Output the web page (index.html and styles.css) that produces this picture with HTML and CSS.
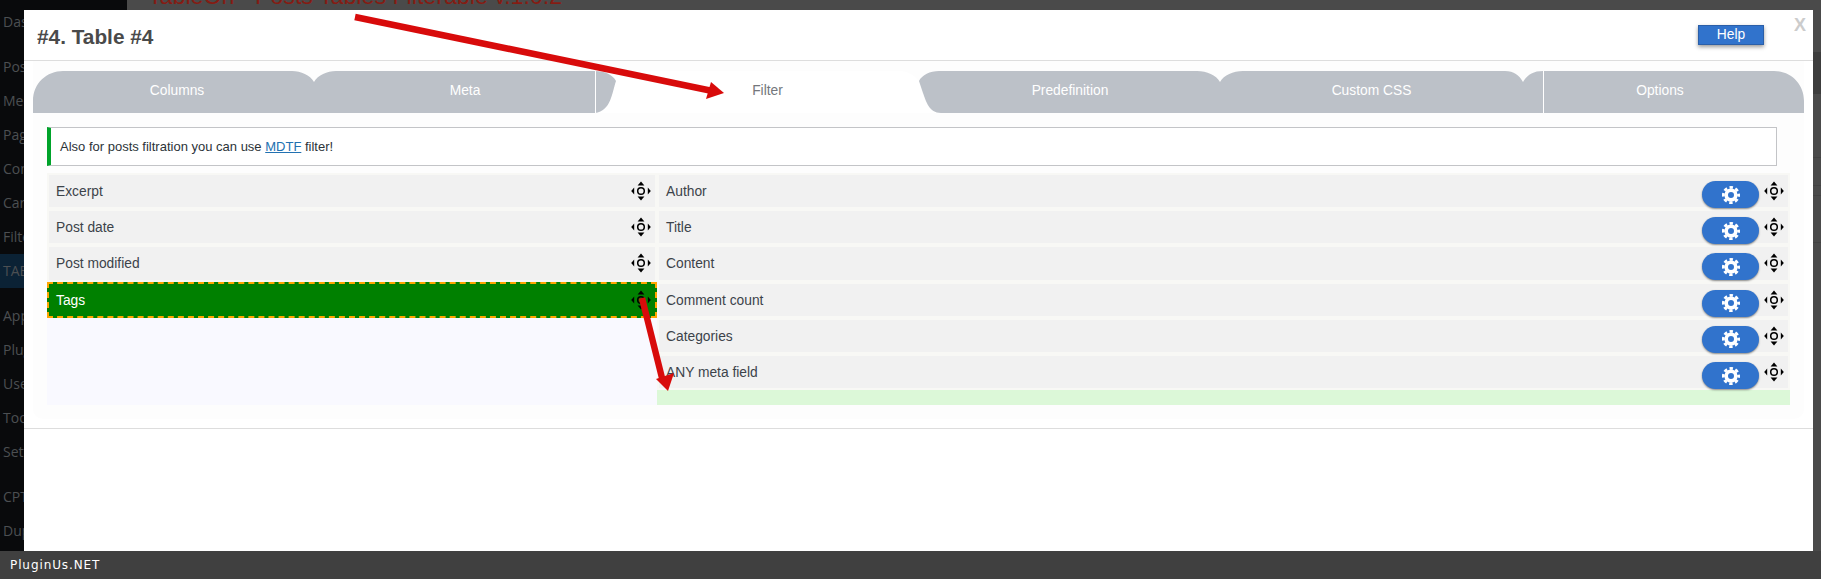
FILE: index.html
```html
<!DOCTYPE html>
<html lang="en">
<head>
    <title>TableOn - Posts Tables Filterable</title>
    <link rel="stylesheet" href="styles.css">
</head>
<body>
    <div class="page">
        <div class="sidebar">
            <ul class="menu">
                <li>Dashboard</li>
            </ul>
            <ul class="menu">
                <li>Posts</li>
                <li>Media</li>
                <li>Pages</li>
                <li>Comments</li>
                <li>Cars</li>
                <li>Filters</li>
                <li class="current">TABLEON</li>
            </ul>
            <ul class="menu">
                <li>Appearance</li>
                <li>Plugins</li>
                <li>Users</li>
                <li>Tools</li>
                <li>Settings</li>
            </ul>
            <ul class="menu">
                <li>CPT UI</li>
                <li>Duplicator</li>
            </ul>
        </div>
        <div class="content">
            <h1 class="page-title">TableOn - Posts Tables Filterable v.1.0.2</h1>
        </div>
    </div>
    <div class="bottom-bar">PluginUs.NET</div>

    <div class="modal">
        <a class="modal-close" href="#">X</a>
        <div class="modal-head">
            <h2>#4. Table #4</h2>
            <button type="button" class="help-btn">Help</button>
        </div>
        <div class="panel">
            <div class="tabs">
                <svg class="tab-shapes" viewBox="0 0 1771 42" width="1771" height="42">
                    <path class="shape-active" d="M562 42C578 40 579 22 583 10C580 5 576 1 570 0H868C876 1 882 5 886 10C890 24 893 42 908 42Z"/>
                    <path class="shape-grey" d="M0 42V30C0 12 14 0 30 0H259C268 0 277 4 281 11C285 4 294 0 303 0H562C572 0 580 4 583 10C579 22 578 40 562 42Z"/>
                    <path class="shape-grey" d="M908 42C896 42 893 30 890 22L886 10C889 4 897 0 906 0H1164C1174 0 1183 4 1187 11C1191 4 1200 0 1210 0H1472C1481 0 1486 4 1490 11C1494 4 1500 0 1510 0H1741C1758 0 1771 13 1771 30V42Z"/>
                    <path class="shape-line" d="M562.5 0V42M1510.5 0V42"/>
                </svg>
                <a class="tab tab-columns" href="#">Columns</a>
                <a class="tab tab-meta" href="#">Meta</a>
                <a class="tab tab-filter active" href="#">Filter</a>
                <a class="tab tab-predef" href="#">Predefinition</a>
                <a class="tab tab-css" href="#">Custom CSS</a>
                <a class="tab tab-options" href="#">Options</a>
            </div>
            <div class="tab-body">
                <div class="notice">Also for posts filtration you can use <a href="#">MDTF</a> filter!</div>
                <div class="lists">
                    <ul class="sort-list unused">
                        <li class="row"><span class="row-title">Excerpt</span><svg class="move-icon"><use href="#move"/></svg></li>
                        <li class="row"><span class="row-title">Post date</span><svg class="move-icon"><use href="#move"/></svg></li>
                        <li class="row"><span class="row-title">Post modified</span><svg class="move-icon"><use href="#move"/></svg></li>
                        <li class="row dragged"><span class="row-title">Tags</span><svg class="move-icon"><use href="#move"/></svg></li>
                    </ul>
                    <ul class="sort-list used">
                        <li class="row"><span class="row-title">Author</span><button type="button" class="gear-btn"><svg class="gear-icon"><use href="#gear"/></svg></button><svg class="move-icon"><use href="#move"/></svg></li>
                        <li class="row"><span class="row-title">Title</span><button type="button" class="gear-btn"><svg class="gear-icon"><use href="#gear"/></svg></button><svg class="move-icon"><use href="#move"/></svg></li>
                        <li class="row"><span class="row-title">Content</span><button type="button" class="gear-btn"><svg class="gear-icon"><use href="#gear"/></svg></button><svg class="move-icon"><use href="#move"/></svg></li>
                        <li class="row"><span class="row-title">Comment count</span><button type="button" class="gear-btn"><svg class="gear-icon"><use href="#gear"/></svg></button><svg class="move-icon"><use href="#move"/></svg></li>
                        <li class="row"><span class="row-title">Categories</span><button type="button" class="gear-btn"><svg class="gear-icon"><use href="#gear"/></svg></button><svg class="move-icon"><use href="#move"/></svg></li>
                        <li class="row"><span class="row-title">ANY meta field</span><button type="button" class="gear-btn"><svg class="gear-icon"><use href="#gear"/></svg></button><svg class="move-icon"><use href="#move"/></svg></li>
                    </ul>
                </div>
            </div>
        </div>
        <div class="modal-rule"></div>
    </div>

    <!-- red arrows drawn on the screenshot -->
    <svg class="arrows" viewBox="0 0 1821 579" width="1821" height="579">
        <path d="M355 17L710 90.5" />
        <polygon points="724,93 711,82 706,99"/>
        <path d="M642 298L662 378" />
        <polygon points="668,391 656,379 674,373"/>
    </svg>

    <svg class="defs">
        <symbol id="move" viewBox="0 0 20 20">
            <polygon points="10,0.5 6.6,4.5 13.4,4.5"/>
            <polygon points="10,19.5 6.6,15.5 13.4,15.5"/>
            <polygon points="0.2,10 3.2,6.6 3.2,13.4"/>
            <polygon points="19.8,10 16.8,6.6 16.8,13.4"/>
            <circle cx="10" cy="10" r="3.3" fill="none" stroke="#000" stroke-width="1.5"/>
        </symbol>
        <symbol id="gear" viewBox="-9 -9 18 18">
            <circle r="4.8" fill="none" stroke="#fff" stroke-width="3.6"/>
            <circle r="7.6" fill="none" stroke="#fff" stroke-width="2.8" stroke-dasharray="3.4 2.57" stroke-dashoffset="1.7"/>
        </symbol>
    </svg>
</body>
</html>
```

FILE: styles.css
```css
html, body {
    height: 100%;
}
body {
    margin: 0;
    font-family: "Liberation Sans", Arial, sans-serif;
    font-size: 13.8px;
    color: #3c434a;
    display: flex;
    flex-direction: column;
    overflow: hidden;
    background-color: #4a4a4a;
}
a {
    text-decoration: none;
}
ul {
    list-style: none;
    margin: 0;
    padding: 0;
}
button {
    font-family: inherit;
    border: none;
    cursor: pointer;
}

/* page behind the popup */
.page {
    flex: 1;
    display: flex;
    min-height: 0;
}
.sidebar {
    width: 127px;
    padding-top: 5px;
    background-color: #090a0c;
    font-family: "Open Sans", sans-serif;
    font-size: 14px;
    color: #4c4f52;
}
.menu {
    margin-bottom: 11px;
}
.menu li {
    width: 21px;
    height: 34px;
    line-height: 34px;
    padding-left: 3px;
    overflow: hidden;
    white-space: nowrap;
}
.menu .current {
    background-color: #0b2235;
}
.content {
    flex: 1;
    background-color: #4a4a4a;
    background-image: linear-gradient(to bottom,
        transparent 52px, #3d3d3d 52px, #3d3d3d 94px, transparent 94px,
        transparent 157px, #424242 157px, #424242 158px, transparent 158px,
        transparent 185px, #424242 185px, #424242 186px, transparent 186px,
        transparent 195px, #424242 195px, #424242 196px, transparent 196px,
        transparent 242px, #424242 242px, #424242 243px, transparent 243px);
}
.page-title {
    margin: -19px 0 0 21px;
    font-size: 23.2px;
    font-weight: normal;
    line-height: 30px;
    color: #851c13;
}
.bottom-bar {
    height: 28px;
    line-height: 28px;
    padding-left: 10px;
    background-color: #404040;
    color: #fff;
    font-family: "DejaVu Sans", sans-serif;
    font-size: 12px;
    letter-spacing: 0.9px;
}

/* popup */
.modal {
    position: fixed;
    top: 10px;
    left: 24px;
    right: 8px;
    bottom: 28px;
    background-color: #fff;
}
.modal-close {
    position: absolute;
    top: 5px;
    right: 7px;
    color: #ccc;
    font-size: 18px;
    font-weight: bold;
}
.modal-head {
    height: 50px;
    padding: 0 49px 0 13px;
    display: flex;
    align-items: center;
    justify-content: space-between;
    border-bottom: 1px solid #ddd;
}
.modal-head h2 {
    margin: 3px 0 0;
    font-size: 20.8px;
    color: #4a4a4a;
}
.help-btn {
    width: 66px;
    height: 20px;
    padding: 0;
    background-color: #3173cc;
    border: 1px solid #2b5fa8;
    color: #fff;
    font-size: 13.8px;
    line-height: 16px;
    box-shadow: 0 2px 4px rgba(0, 0, 0, 0.4);
}
.panel {
    margin: 0 9px;
    padding: 10px 0 14px;
    background-color: #fdfdfd;
    border-radius: 0 0 10px 10px;
}
.modal-rule {
    margin-top: 9px;
    border-top: 1px solid #ddd;
}

/* tabs */
.tabs {
    position: relative;
    display: flex;
    height: 42px;
}
.tab-shapes {
    position: absolute;
    top: 0;
    left: 0;
}
.shape-grey {
    fill: #bcc1c8;
}
.shape-active {
    fill: #fff;
}
.shape-line {
    fill: none;
    stroke: #fff;
    stroke-width: 1;
}
.tab {
    position: relative;
    line-height: 40px;
    text-align: center;
    color: #fff;
}
.tab.active {
    color: #74777c;
}
.tab-columns, .tab-meta, .tab-predef {
    width: 288px;
}
.tab-filter {
    width: 317px;
}
.tab-css {
    width: 315px;
}
.tab-options {
    width: 262px;
}

.tab-body {
    padding: 14px 14px 0;
}
.notice {
    height: 39px;
    line-height: 37px;
    margin: 0 13px 7px 0;
    padding-left: 9px;
    box-sizing: border-box;
    background-color: #fff;
    border: 1px solid #c3c4c7;
    border-left: 4px solid #00a32a;
    font-size: 13px;
    color: #2c3338;
}
.notice a {
    color: #2271b1;
    text-decoration: underline;
}

/* sortable lists */
.lists {
    display: flex;
}
.sort-list {
    height: 232px;
}
.unused {
    width: 610px;
    background-color: #f9f9ff;
}
.used {
    flex: 1;
    background-color: #dcf8d8;
}
.row {
    display: flex;
    align-items: center;
    height: 36.2px;
    box-sizing: border-box;
    background-color: #f1f1f1;
    border: 2px solid #f8f8f5;
}
.row-title {
    flex: 1;
    padding: 1px 0 0 7px;
}
.row.dragged {
    background-color: #008000;
    border: 2px dashed #ffa500;
    color: #fff;
}
.move-icon {
    width: 20px;
    height: 20px;
    margin-right: 4px;
}
.gear-btn {
    display: flex;
    align-items: center;
    justify-content: center;
    width: 57px;
    height: 27px;
    margin: 7px 5px 0 0;
    padding: 0;
    background-color: #3173cc;
    border-radius: 14px;
    box-shadow: 0 1px 2px rgba(0, 0, 0, 0.45);
}
.gear-icon {
    width: 18px;
    height: 18px;
}

/* overlay */
.arrows {
    position: fixed;
    top: 0;
    left: 0;
    pointer-events: none;
}
.arrows path {
    fill: none;
    stroke: #d80b0b;
    stroke-width: 6.5;
}
.arrows polygon {
    fill: #d80b0b;
}
.defs {
    position: absolute;
    width: 0;
    height: 0;
}
```
